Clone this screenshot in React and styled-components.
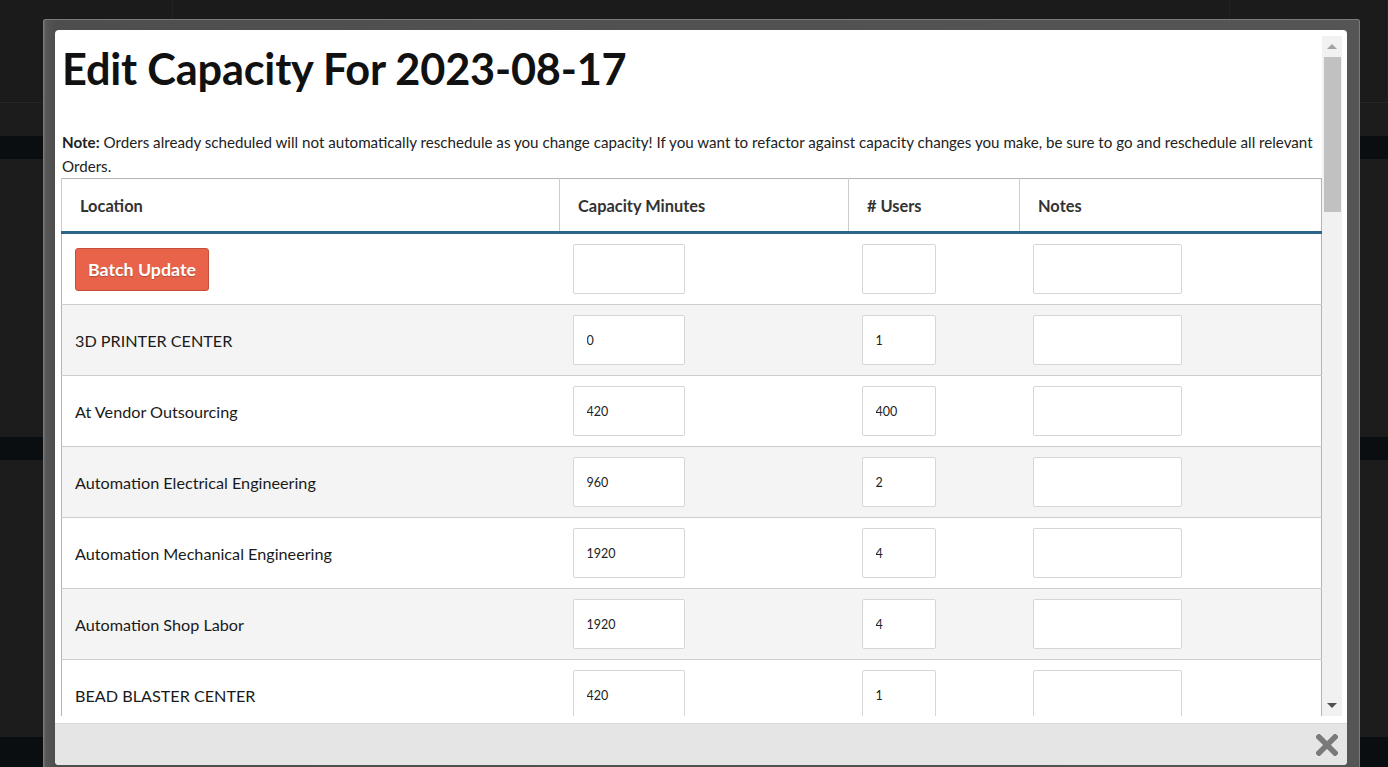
import styled, { createGlobalStyle } from "styled-components"

const Global = createGlobalStyle`
    html, body {
        margin: 0;
        height: 100%;
        overflow: hidden;
        background: #1c1c1c;
        font-family: Lato, "Open Sans", sans-serif;
    }
`

const rows = [
    { name: "3D PRINTER CENTER", minutes: "0", users: "1" },
    { name: "At Vendor Outsourcing", minutes: "420", users: "400" },
    { name: "Automation Electrical Engineering", minutes: "960", users: "2" },
    { name: "Automation Mechanical Engineering", minutes: "1920", users: "4" },
    { name: "Automation Shop Labor", minutes: "1920", users: "4" },
    { name: "BEAD BLASTER CENTER", minutes: "420", users: "1" },
]

const Backdrop = styled.div`
    height: 100vh;
    display: flex;
    flex-direction: column;
`

const TopBar = styled.div`
    height: 103px;
    display: grid;
    grid-template-columns: 173px 1fr 158px;
    border-bottom: 1px solid #252525;
`

const TopCell = styled.div`
    background: #1b1b1b;
    border-right: 1px solid #222;
`

const Band = styled.div`
    height: ${p => p.$h}px;
    flex-shrink: 0;
    background: ${p => (p.$dark ? "#0a0e11" : "#1c1c1c")};
`

const Frame = styled.div`
    position: fixed;
    left: 43px;
    top: 19px;
    width: 1317px;
    height: 760px;
    box-sizing: border-box;
    padding: 10px 12px 0 11px;
    background: linear-gradient(90deg, #6a6a6a 0, #575757 2px, #4e4e4e 10px, #555 100%);
    border: 1px solid #7a7a7a;
    border-radius: 2px;
`

const Panel = styled.div`
    height: 735px;
    background: #fff;
    border-radius: 4px;
    display: flex;
    flex-direction: column;
    overflow: hidden;
`

const BodyWrap = styled.div`
    display: flex;
    height: 680px;
    padding: 6px 5px 7px 6px;
`

const Scroll = styled.div`
    flex: 1;
    overflow-y: auto;
    overflow-x: hidden;
    scrollbar-width: none;
    color: #222;

    &::-webkit-scrollbar {
        display: none;
    }
`

const Track = styled.div`
    width: 20px;
    background: #f1f1f1;
    display: flex;
    flex-direction: column;
    align-items: center;
`

const Arrow = styled.div`
    height: 21px;
    width: 100%;
    display: flex;
    align-items: center;
    justify-content: center;

    &::after {
        content: "";
        border-left: 5px solid transparent;
        border-right: 5px solid transparent;
        ${p => (p.$down ? "border-top: 5px solid #505050;" : "border-bottom: 5px solid #a3a3a3;")}
    }
`

const Thumb = styled.div`
    width: 17px;
    height: 155px;
    background: #c1c1c1;
    margin-left: 1px;
`

const Fill = styled.div`
    flex: 1;
`

const Title = styled.h1`
    margin: 0;
    padding: 5px 0 0 1px;
    font-size: 43.3px;
    line-height: 54px;
    font-weight: 700;
    color: #111;
    letter-spacing: -0.2px;
`

const Note = styled.p`
    margin: 35px 0 0 0;
    padding-left: 1px;
    font-size: 15.15px;
    line-height: 24px;
    color: #222;
`

const NoteLabel = styled.strong`
    font-weight: 700;
    margin-right: 4px;
`

const Table = styled.table`
    width: 1260px;
    border-collapse: collapse;
    table-layout: fixed;
    border: 1px solid #b5b5b5;
    border-bottom: none;
`

const Th = styled.th`
    width: ${p => p.$w}px;
    height: 54px;
    box-sizing: border-box;
    padding: 0 0 0 18px;
    text-align: left;
    font-size: 16.4px;
    font-weight: 700;
    color: #333;
    border-left: 1px solid #ccc;
    border-bottom: 3px solid #2b6587;
`

const Row = styled.tr`
    background: ${p => (p.$striped ? "#f4f4f4" : "#fff")};
    border-bottom: 1px solid #ccc;
`

const Td = styled.td`
    height: 70px;
    padding: 0 13px;
    font-size: 16.2px;
    color: #1a1a1a;
    vertical-align: middle;
`

const Input = styled.input`
    display: block;
    box-sizing: border-box;
    width: ${p => p.$w}px;
    height: 50px;
    padding: 0 13px;
    border: 1px solid #d6d6d6;
    border-radius: 2px;
    background: #fff;
    font-family: Lato, sans-serif;
    font-size: 12.5px;
    color: #222;
    outline: none;
`

const BatchButton = styled.button`
    height: 43px;
    padding: 0 12px;
    background: #e8634a;
    border: 1px solid #c4503b;
    border-radius: 3px;
    color: #fff;
    font-family: Lato, sans-serif;
    font-size: 17.8px;
    font-weight: 700;
    text-shadow: 0 1px 1px rgba(0, 0, 0, 0.25);
    cursor: pointer;
`

const Footer = styled.div`
    height: 42px;
    box-sizing: border-box;
    background: #e5e5e5;
    border-top: 1px solid #d9d9d9;
    display: flex;
    align-items: center;
    justify-content: flex-end;
    padding-right: 9px;
`

const Close = styled.button`
    border: none;
    background: none;
    padding: 0;
    width: 22px;
    height: 22px;
    cursor: pointer;
    display: flex;
`

const columns = [
    { label: "Location", w: 498 },
    { label: "Capacity Minutes", w: 289 },
    { label: "# Users", w: 171 },
    { label: "Notes", w: 302 },
]

export default function App() {
    return (
        <>
            <Global />
            <Backdrop>
                <TopBar>
                    <TopCell />
                    <TopCell />
                    <TopCell />
                </TopBar>
                <Band $h={33} />
                <Band $h={23} $dark />
                <Band $h={278} />
                <Band $h={23} $dark />
                <Band $h={277} />
                <Band $h={30} $dark />
            </Backdrop>
            <Frame>
                <Panel>
                    <BodyWrap>
                        <Scroll>
                            <Title>Edit Capacity For 2023-08-17</Title>
                            <Note>
                                <NoteLabel>Note:</NoteLabel>Orders already scheduled will not automatically reschedule
                                as you change capacity! If you want to refactor against capacity changes you make, be
                                sure to go and reschedule all relevant Orders.
                            </Note>
                            <Table>
                                <thead>
                                    <tr>
                                        {columns.map(c => (
                                            <Th key={c.label} $w={c.w}>{c.label}</Th>
                                        ))}
                                    </tr>
                                </thead>
                                <tbody>
                                    <Row>
                                        <Td><BatchButton>Batch Update</BatchButton></Td>
                                        <Td><Input $w={112} /></Td>
                                        <Td><Input $w={74} /></Td>
                                        <Td><Input $w={149} /></Td>
                                    </Row>
                                    {rows.map((r, i) => (
                                        <Row key={r.name} $striped={i % 2 === 0}>
                                            <Td>{r.name}</Td>
                                            <Td><Input $w={112} defaultValue={r.minutes} /></Td>
                                            <Td><Input $w={74} defaultValue={r.users} /></Td>
                                            <Td><Input $w={149} /></Td>
                                        </Row>
                                    ))}
                                </tbody>
                            </Table>
                        </Scroll>
                        <Track>
                            <Arrow />
                            <Thumb />
                            <Fill />
                            <Arrow $down />
                        </Track>
                    </BodyWrap>
                    <Footer>
                        <Close aria-label="Close">
                            <svg width="22" height="22" viewBox="0 0 22 22">
                                <path d="M3 3 L19 19 M19 3 L3 19" stroke="#7a7a7a" strokeWidth="5.5" strokeLinecap="square" />
                            </svg>
                        </Close>
                    </Footer>
                </Panel>
            </Frame>
        </>
    )
}
